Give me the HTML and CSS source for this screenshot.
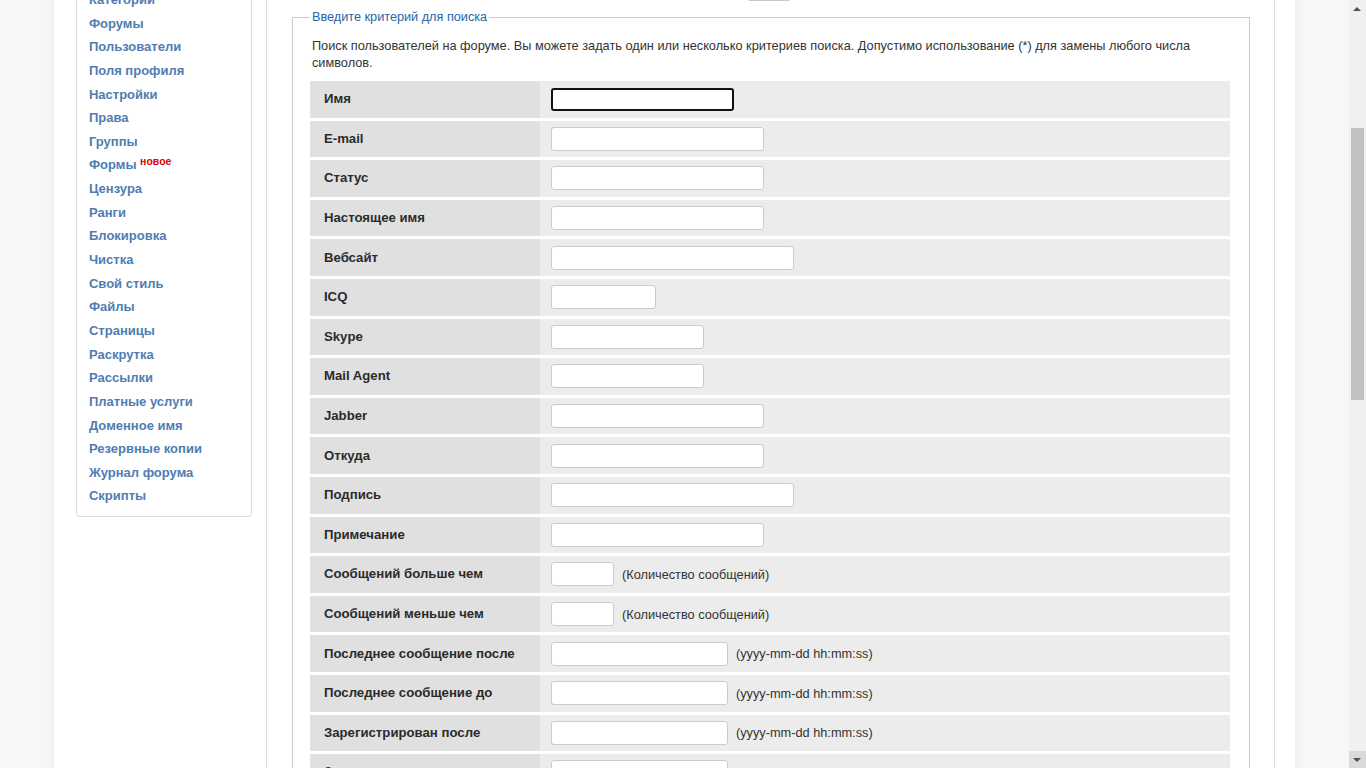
FILE: index.html
```html
<!DOCTYPE html>
<html lang="ru">
<head>
<meta charset="utf-8">
<title>Поиск пользователей</title>
<link rel="stylesheet" href="styles.css">
</head>
<body>
<div class="viewport">
  <div class="page">
    <aside class="sidebar">
      <div class="side-box">
        <ul class="side-menu">
          <li><a href="#">Категории</a></li>
          <li><a href="#">Форумы</a></li>
          <li><a href="#">Пользователи</a></li>
          <li><a href="#">Поля профиля</a></li>
          <li><a href="#">Настройки</a></li>
          <li><a href="#">Права</a></li>
          <li><a href="#">Группы</a></li>
          <li><a href="#">Формы</a> <sup class="new">новое</sup></li>
          <li><a href="#">Цензура</a></li>
          <li><a href="#">Ранги</a></li>
          <li><a href="#">Блокировка</a></li>
          <li><a href="#">Чистка</a></li>
          <li><a href="#">Свой стиль</a></li>
          <li><a href="#">Файлы</a></li>
          <li><a href="#">Страницы</a></li>
          <li><a href="#">Раскрутка</a></li>
          <li><a href="#">Рассылки</a></li>
          <li><a href="#">Платные услуги</a></li>
          <li><a href="#">Доменное имя</a></li>
          <li><a href="#">Резервные копии</a></li>
          <li><a href="#">Журнал форума</a></li>
          <li><a href="#">Скрипты</a></li>
        </ul>
      </div>
    </aside>
    <main class="content">
      <div class="toolbar"><span class="tool-btn"></span></div>
      <fieldset class="search">
        <legend>Введите критерий для поиска</legend>
        <p class="intro">Поиск пользователей на форуме. Вы можете задать один или несколько критериев поиска. Допустимо использование (*) для замены любого числа символов.</p>
        <table class="form">
          <tr><td class="lbl">Имя</td><td class="fld"><input class="in focused" type="text"></td></tr>
          <tr><td class="lbl">E-mail</td><td class="fld"><input class="in w212" type="text"></td></tr>
          <tr><td class="lbl">Статус</td><td class="fld"><input class="in w212" type="text"></td></tr>
          <tr><td class="lbl">Настоящее имя</td><td class="fld"><input class="in w212" type="text"></td></tr>
          <tr><td class="lbl">Вебсайт</td><td class="fld"><input class="in w242" type="text"></td></tr>
          <tr><td class="lbl">ICQ</td><td class="fld"><input class="in w104" type="text"></td></tr>
          <tr><td class="lbl">Skype</td><td class="fld"><input class="in w152" type="text"></td></tr>
          <tr><td class="lbl">Mail Agent</td><td class="fld"><input class="in w152" type="text"></td></tr>
          <tr><td class="lbl">Jabber</td><td class="fld"><input class="in w212" type="text"></td></tr>
          <tr><td class="lbl">Откуда</td><td class="fld"><input class="in w212" type="text"></td></tr>
          <tr><td class="lbl">Подпись</td><td class="fld"><input class="in w242" type="text"></td></tr>
          <tr><td class="lbl">Примечание</td><td class="fld"><input class="in w212" type="text"></td></tr>
          <tr><td class="lbl">Сообщений больше чем</td><td class="fld"><input class="in w62" type="text"><span class="hint">(Количество сообщений)</span></td></tr>
          <tr><td class="lbl">Сообщений меньше чем</td><td class="fld"><input class="in w62" type="text"><span class="hint">(Количество сообщений)</span></td></tr>
          <tr><td class="lbl">Последнее сообщение после</td><td class="fld"><input class="in w176" type="text"><span class="hint">(yyyy-mm-dd hh:mm:ss)</span></td></tr>
          <tr><td class="lbl">Последнее сообщение до</td><td class="fld"><input class="in w176" type="text"><span class="hint">(yyyy-mm-dd hh:mm:ss)</span></td></tr>
          <tr><td class="lbl">Зарегистрирован после</td><td class="fld"><input class="in w176" type="text"><span class="hint">(yyyy-mm-dd hh:mm:ss)</span></td></tr>
          <tr><td class="lbl">Зарегистрирован до</td><td class="fld"><input class="in w176" type="text"><span class="hint">(yyyy-mm-dd hh:mm:ss)</span></td></tr>
        </table>
      </fieldset>
    </main>
  </div>
</div>
<div class="scrollbar">
  <div class="sb-up"></div>
  <div class="sb-thumb"></div>
  <div class="sb-down"></div>
</div>
</body>
</html>
```
FILE: styles.css
```css
html, body {
  margin: 0;
  padding: 0;
  height: 768px;
  overflow: hidden;
}
body {
  background: #f6f7f8;
  font-family: "Liberation Sans", Arial, sans-serif;
  font-size: 13px;
  color: #333;
}
.viewport {
  margin-right: 17px;
}
.page {
  width: 92%;
  margin: -40px auto 0;
  background: #fff;
  display: flex;
  align-items: flex-start;
  padding-right: 21px;
  box-sizing: border-box;
  min-height: 900px;
  box-shadow: 0 0 8px rgba(0, 0, 0, 0.07);
}
.sidebar {
  width: 212px;
  flex: none;
  padding: 0 14px 0 22px;
  box-sizing: border-box;
}
.side-box {
  border: 1px solid #dcdcdc;
  border-top: none;
  border-radius: 0 0 4px 4px;
  padding: 28px 10px 8px 12px;
}
.side-menu {
  list-style: none;
  margin: 0;
  padding: 0;
}
.side-menu li {
  line-height: 23.65px;
  height: 23.65px;
  white-space: nowrap;
}
.side-menu a {
  color: #4f7db2;
  font-weight: bold;
  text-decoration: none;
  font-size: 13px;
}
.new {
  color: #e00000;
  font-weight: bold;
  font-size: 10.5px;
  line-height: 0;
  vertical-align: baseline;
  position: relative;
  top: -4px;
}
.content {
  flex: none;
  width: 1009px;
  box-sizing: border-box;
  border-left: 1px solid #dcdcdc;
  border-right: 1px solid #dcdcdc;
  padding: 0 24px 40px 25px;
  min-height: 900px;
}
.toolbar {
  height: 41px;
  display: flex;
  justify-content: center;
  align-items: flex-end;
}
.tool-btn {
  width: 42px;
  height: 26px;
  border: 1px solid #c8c8c8;
  border-radius: 3px;
  background: #f3f3f3;
  margin-left: -4px;
}
.search {
  margin: 8px 0 0;
  border: 1px solid #cbcbcb;
  padding: 0 19px 10px 17px;
  min-width: 0;
}
.search legend {
  color: #2566a8;
  padding: 0 2px;
  font-size: 12.7px;
  line-height: 17px;
}
.intro {
  margin: 11px 0 7px 2px;
  line-height: 17px;
  font-size: 12.75px;
  color: #333;
}
.form {
  width: 920px;
  border-collapse: separate;
  border-spacing: 0 3px;
}
.form td {
  height: 36.6px;
  padding: 0;
  vertical-align: middle;
}
.lbl {
  width: 230px;
  box-sizing: border-box;
  padding: 0 0 1px 14px !important;
  background: #dfe0df;
  font-weight: bold;
  color: #2b2b2b;
  font-size: 13.2px;
}
.fld {
  background: #ececec;
  padding-left: 11px !important;
  white-space: nowrap;
}
.in {
  box-sizing: border-box;
  height: 24px;
  border: 1px solid #cbcbcb;
  border-radius: 3px;
  background: #fff;
  vertical-align: middle;
  margin: 0;
  padding: 0 4px;
  font-family: inherit;
}
.focused {
  width: 183px;
  height: 23px;
  border: 2px solid #111;
  border-radius: 3px;
}
.w62 { width: 63px; }
.w104 { width: 105px; }
.w152 { width: 153px; }
.w176 { width: 177px; }
.w212 { width: 213px; }
.w242 { width: 243px; }
.hint {
  margin-left: 8px;
  font-size: 12.75px;
  color: #333;
  vertical-align: middle;
}
.scrollbar {
  position: fixed;
  top: 0;
  right: 0;
  width: 17px;
  height: 768px;
  background: #f0f0f0;
}
.sb-up, .sb-down {
  position: absolute;
  left: 0;
  width: 17px;
  height: 17px;
}
.sb-up { top: 0; }
.sb-down { bottom: 0; background: #dadada; }
.sb-up::after, .sb-down::after {
  content: "";
  position: absolute;
  left: 4px;
  border-left: 4px solid transparent;
  border-right: 4px solid transparent;
}
.sb-up::after {
  top: 7px;
  border-bottom: 4px solid #505050;
}
.sb-down::after {
  top: 7px;
  border-top: 4px solid #505050;
}
.sb-thumb {
  position: absolute;
  left: 2px;
  top: 128px;
  width: 13px;
  height: 272px;
  background: #c1c1c1;
}
```
